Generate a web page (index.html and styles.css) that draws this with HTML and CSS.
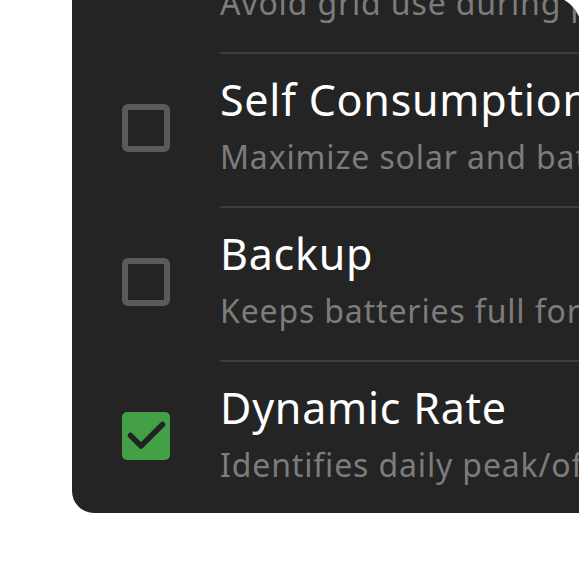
FILE: index.html
```html
<!DOCTYPE html>
<html lang="en">
<head>
<meta charset="utf-8">
<title>Operating modes</title>
<link rel="stylesheet" href="styles.css">
</head>
<body>
<main class="page">
  <section class="card">
    <ul class="modes">
      <li class="mode">
        <span class="box box--off" aria-hidden="true"></span>
        <div class="mode__text">
          <div class="mode__title">Time-Based Control</div>
          <div class="mode__desc">Avoid grid use during peak hours</div>
        </div>
      </li>
      <li class="mode">
        <span class="box box--off" aria-hidden="true"></span>
        <div class="mode__text mode__text--rule">
          <div class="mode__title">Self Consumption</div>
          <div class="mode__desc">Maximize solar and battery usage</div>
        </div>
      </li>
      <li class="mode">
        <span class="box box--off" aria-hidden="true"></span>
        <div class="mode__text mode__text--rule">
          <div class="mode__title">Backup</div>
          <div class="mode__desc">Keeps batteries full for outages</div>
        </div>
      </li>
      <li class="mode mode--last">
        <span class="box box--on" aria-hidden="true">
          <svg viewBox="0 0 48 48" width="48" height="48"><polyline points="8.5,23.5 19,34 40.5,12.5" fill="none" stroke="#232323" stroke-width="5.5" stroke-linecap="round" stroke-linejoin="round"/></svg>
        </span>
        <div class="mode__text mode__text--rule">
          <div class="mode__title">Dynamic Rate</div>
          <div class="mode__desc">Identifies daily peak/off-peak rates</div>
        </div>
      </li>
    </ul>
  </section>
</main>
</body>
</html>
```
FILE: styles.css
```css
html, body {
  margin: 0;
  padding: 0;
  background: #ffffff;
  overflow: hidden;
}

body {
  width: 579px;
  height: 585px;
}

.page {
  display: flex;
  padding-left: 72px;
  font-family: "Noto Sans", "Open Sans", sans-serif;
}

.card {
  flex: 0 0 510px;
  width: 510px;
  margin-top: -5px;
  background: #242424;
  border-radius: 0 36px 0 22px;
  overflow: hidden;
}

.modes {
  list-style: none;
  margin: -97px 0 0 0;
  padding: 0;
}

.mode {
  display: flex;
  align-items: center;
  padding-left: 50px;
  gap: 50px;
}

.box {
  flex: 0 0 48px;
  width: 48px;
  height: 48px;
  box-sizing: border-box;
  border-radius: 6px;
  margin-bottom: 2px;
  display: flex;
}

.box--off {
  border: 6px solid #5a5a5a;
}

.box--on {
  background: #43a047;
  border-radius: 5px;
}

.mode__text {
  flex: 1 1 auto;
  min-width: 0;
  padding: 22px 0 27px 0;
  white-space: nowrap;
}

.mode__text--rule {
  border-top: 2px solid #3d3d3d;
  padding-top: 20px;
}

.mode--last .mode__text {
  padding-bottom: 26px;
}

.mode__title {
  font-size: 43px;
  line-height: 52px;
  letter-spacing: 0.75px;
  color: #ffffff;
}

.mode__desc {
  margin-top: 9px;
  font-size: 32px;
  line-height: 44px;
  letter-spacing: 0.85px;
  color: #7c7c7c;
}
```
